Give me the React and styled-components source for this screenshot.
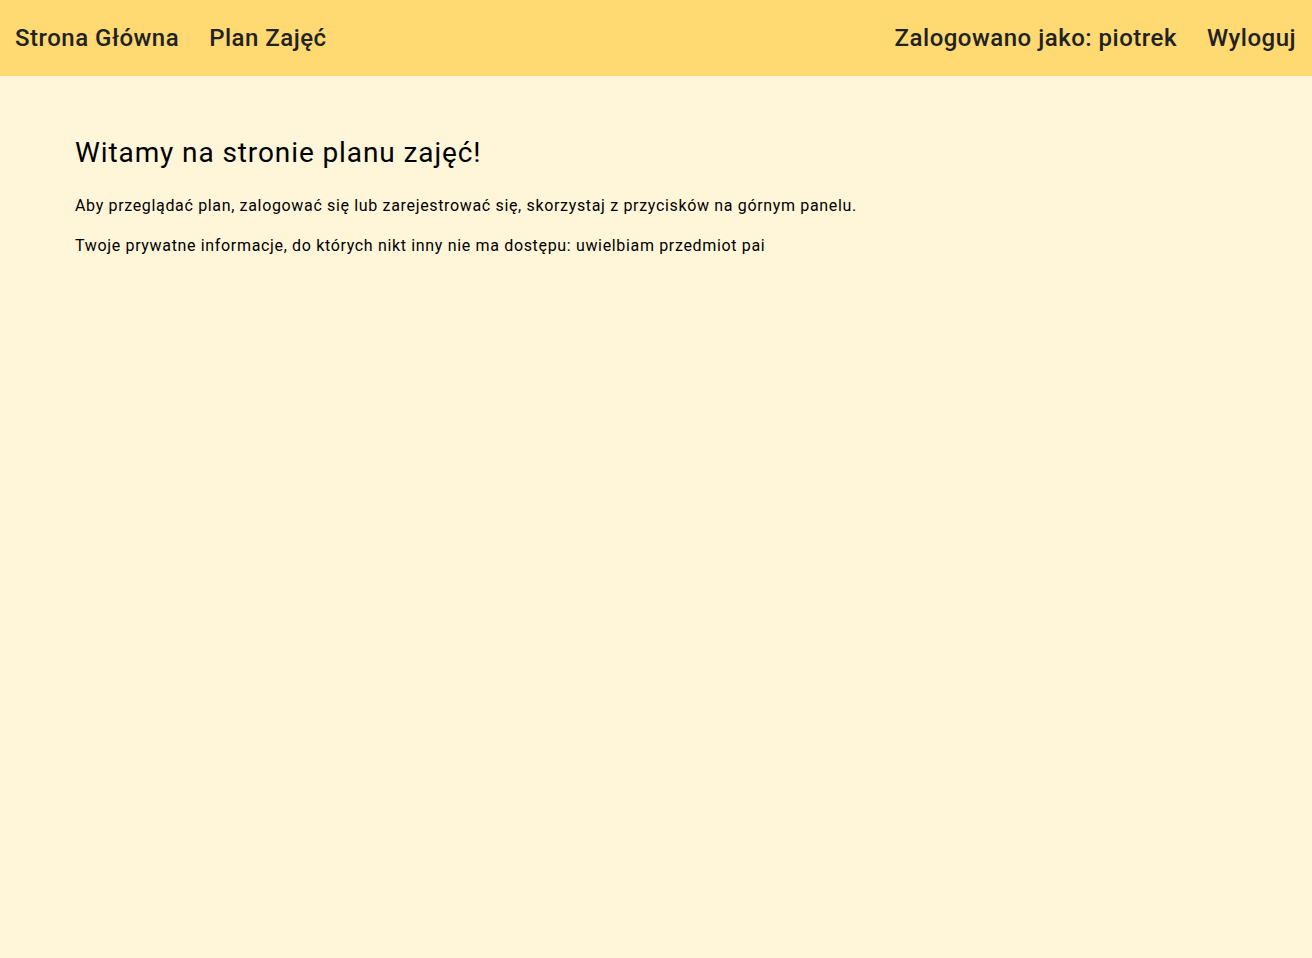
import styled, { createGlobalStyle } from 'styled-components'

const GlobalStyle = createGlobalStyle`
  html, body {
    margin: 0;
    padding: 0;
    background: #fff6d9;
    font-family: Roboto, "Liberation Sans", sans-serif;
  }
`

const Page = styled.div`
  min-height: 100vh;
  background: #fff6d9;
`

const NavBar = styled.nav`
  height: 76px;
  background: #ffd972;
  display: flex;
  align-items: center;
  justify-content: space-between;
  padding: 0 16px 0 15px;
  box-sizing: border-box;
`

const NavGroup = styled.div`
  display: flex;
  align-items: center;
  gap: 30px;
`

const NavLink = styled.a`
  font-size: 24px;
  font-weight: 500;
  letter-spacing: 0.5px;
  color: #222;
  text-decoration: none;
  cursor: pointer;
`

const Main = styled.main`
  padding: 60px 75px;
`

const Title = styled.h1`
  font-size: 28px;
  font-weight: 400;
  letter-spacing: 0.9px;
  color: #000;
  margin: 0 0 27px;
`

const Text = styled.p`
  font-size: 16px;
  letter-spacing: 0.66px;
  color: #000;
  margin: 0 0 21px;
`

const App = () => {
  return (
    <Page>
      <GlobalStyle />
      <NavBar>
        <NavGroup>
          <NavLink>Strona Główna</NavLink>
          <NavLink>Plan Zajęć</NavLink>
        </NavGroup>
        <NavGroup>
          <NavLink>Zalogowano jako: piotrek</NavLink>
          <NavLink>Wyloguj</NavLink>
        </NavGroup>
      </NavBar>
      <Main>
        <Title>Witamy na stronie planu zajęć!</Title>
        <Text>Aby przeglądać plan, zalogować się lub zarejestrować się, skorzystaj z przycisków na górnym panelu.</Text>
        <Text>Twoje prywatne informacje, do których nikt inny nie ma dostępu: uwielbiam przedmiot pai</Text>
      </Main>
    </Page>
  )
}

export default App
